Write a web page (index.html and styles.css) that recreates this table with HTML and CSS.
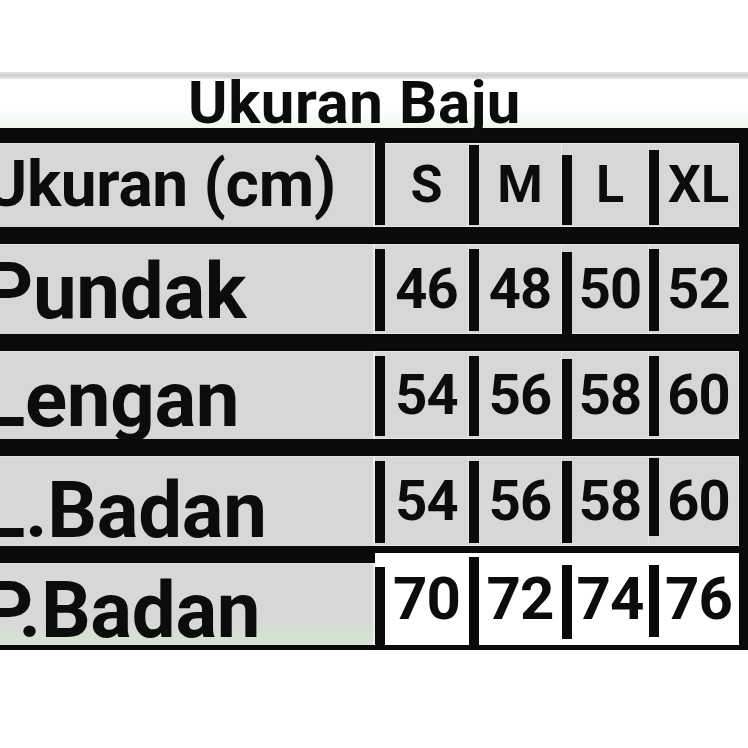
FILE: index.html
```html
<!DOCTYPE html>
<html lang="id">
<head>
<meta charset="utf-8">
<title>Ukuran Baju</title>
<link rel="stylesheet" href="styles.css">
</head>
<body>
<div class="sheet">
  <div class="top-edge"></div>
  <h1 class="title">Ukuran Baju</h1>
  <div class="table">
    <div class="row head">
      <div class="label">Ukuran (cm)</div>
      <div class="cell">S</div>
      <div class="cell">M</div>
      <div class="cell">L</div>
      <div class="cell">XL</div>
    </div>
    <div class="row r1">
      <div class="label">Pundak</div>
      <div class="cell">46</div>
      <div class="cell">48</div>
      <div class="cell">50</div>
      <div class="cell">52</div>
    </div>
    <div class="row r2">
      <div class="label">Lengan</div>
      <div class="cell">54</div>
      <div class="cell">56</div>
      <div class="cell">58</div>
      <div class="cell">60</div>
    </div>
    <div class="row r3">
      <div class="label">L.Badan</div>
      <div class="cell">54</div>
      <div class="cell">56</div>
      <div class="cell">58</div>
      <div class="cell">60</div>
    </div>
    <div class="row r4 last">
      <div class="label">P.Badan</div>
      <div class="cell">70</div>
      <div class="cell">72</div>
      <div class="cell">74</div>
      <div class="cell">76</div>
    </div>
  </div>
</div>
</body>
</html>
```

FILE: styles.css
```css
* { box-sizing: border-box; }
html, body { margin: 0; padding: 0; background: #ffffff; }
body { width: 748px; height: 748px; overflow: hidden; font-family: Roboto, "Liberation Sans", Arial, sans-serif; font-weight: 700; color: #0c0c0c; }

.sheet { padding-top: 72px; }

.top-edge {
  height: 7px;
  background: linear-gradient(to bottom, #e4e4e4, #cdcdcd 50%, #e6e6e6);
}

.title {
  margin: 0;
  height: 49px;
  padding-left: 188px;
  font-size: 60px;
  line-height: 48px;
  letter-spacing: 0.6px;
  font-weight: 700;
  white-space: nowrap;
  background: linear-gradient(to bottom, #ffffff 60%, #eef7ea);
  position: relative;
  z-index: 1;
}

.table {
  background: #0a0a0a;
  width: 748px;
  padding: 15px 9px 5px 0;
  display: grid;
  grid-template-rows: 84px 90px 88px 90px 82px;
  row-gap: 17px;
}

.row {
  display: grid;
  grid-template-columns: 375px 94px 93px 87px 90px;
  background: #0a0a0a;
}

.label {
  background: #d7d7d7;
  border-top: 1px solid #e2e2e2;
  border-right: 2px solid #ececec;
  font-size: 78px;
  line-height: 1;
  white-space: nowrap;
  overflow: hidden;
  text-indent: -17px;
  display: flex;
  align-items: center;
  letter-spacing: -0.3px;
}

.head .label { font-size: 64px; text-indent: -15px; padding-bottom: 2px; }
.r1 .label { padding-top: 4px; }
.r2 .label { padding-top: 8px; }
.r3 .label { padding-top: 18px; }
.r4 .label {
  padding-top: 12px;
  background: linear-gradient(to bottom, #d8d8d8 70%, #d3e5ce);
}

.cell {
  display: flex;
  justify-content: space-between;
  align-items: center;
  background: #d7d7d7;
  font-size: 56px;
  line-height: 1;
  letter-spacing: -1px;
  box-shadow: inset 0 1px 0 #e6e6e6, inset 0 -1px 0 #e6e6e6, inset -1px 0 0 #e6e6e6;
}

.cell::before {
  content: "";
  flex: 0 0 10px;
  align-self: stretch;
  background: #0a0a0a;
  margin: 5px 0 3px;
}

.cell::after {
  content: "";
  flex: 0 0 1px;
}

.head .cell { font-size: 52px; letter-spacing: 0; }
.head .cell::before { margin: 2px 0 2px; }
.head .cell:nth-child(2)::before { margin-top: 0; }
.head .cell:nth-child(4)::before { margin-top: 12px; }
.head .cell:nth-child(5)::before { margin-top: 7px; }

.r1 .cell:nth-child(4)::before { margin: 8px 0 0; }
.r2 .cell:nth-child(4)::before { margin: 8px 0 0; }
.r3 .cell:nth-child(5)::before { margin: 2px 0 10px; }

.last .cell {
  margin-top: -10px;
  background: #ffffff;
  font-size: 60px;
  box-shadow: none;
}
.last .cell::before { margin: 14px 0 0; }
.last .cell:nth-child(3)::before { margin-top: 4px; }
.last .cell:nth-child(4)::before { margin: 12px 0 6px; }
.last .cell:nth-child(5)::before { margin: 12px 0 8px; }
```
